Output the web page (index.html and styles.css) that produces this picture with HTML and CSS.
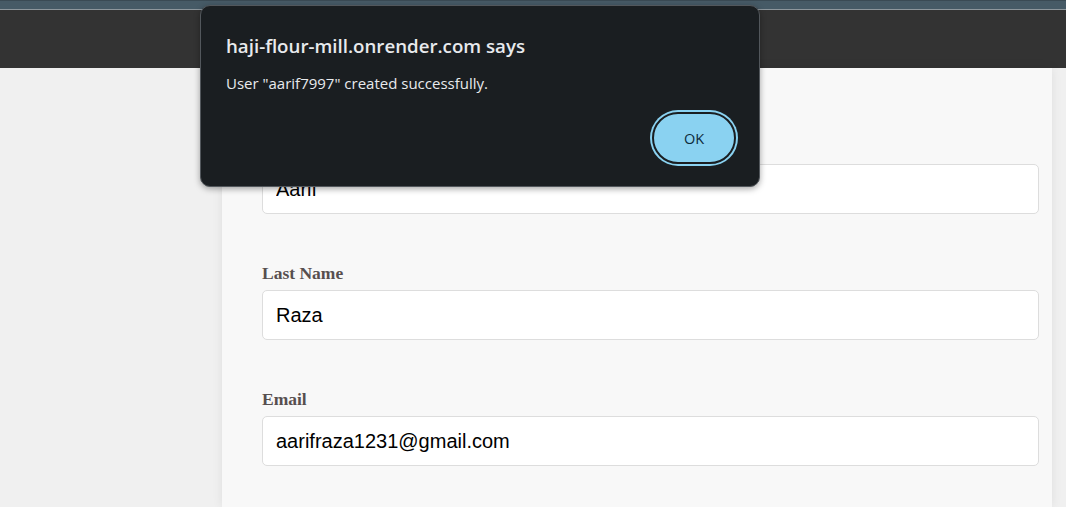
FILE: index.html
```html
<!DOCTYPE html>
<html>
<head>
<meta charset="utf-8">
<link rel="stylesheet" href="styles.css">
</head>
<body>
<div class="topstrip"></div>
<header class="header"></header>
<main class="main">
  <section class="card">
    <form class="form">
      <div class="group">
        <label class="label">First Name</label>
        <input class="input" type="text" value="Aarif">
      </div>
      <div class="group">
        <label class="label">Last Name</label>
        <input class="input" type="text" value="Raza">
      </div>
      <div class="group">
        <label class="label">Email</label>
        <input class="input" type="text" value="aarifraza1231@gmail.com">
      </div>
    </form>
  </section>
</main>
<div class="dialog">
  <div class="dialog-title">haji-flour-mill.onrender.com says</div>
  <div class="dialog-msg">User "aarif7997" created successfully.</div>
  <div class="dialog-actions">
    <button class="ok" type="button">OK</button>
  </div>
</div>
</body>
</html>
```
FILE: styles.css
```css
html, body {
  margin: 0;
  padding: 0;
  height: 100%;
  overflow: hidden;
}
body {
  background: #f0f0f0;
  font-family: "Liberation Sans", Arial, sans-serif;
}
.topstrip {
  box-sizing: border-box;
  height: 10px;
  background: #465a66;
  border-top: 1px solid #3a4a54;
  border-bottom: 1px solid #8d969c;
}
.header {
  height: 58px;
  background: #333333;
}
.main {
  display: flex;
  height: 439px;
}
.card {
  margin-left: 222px;
  width: 830px;
  background: #f8f8f8;
  box-shadow: 0 0 10px rgba(0, 0, 0, 0.08);
}
.form {
  display: flex;
  flex-direction: column;
  padding: 70px 13px 0 40px;
}
.group {
  display: flex;
  flex-direction: column;
  margin-bottom: 50px;
}
.label {
  font-family: "Liberation Serif", "Times New Roman", serif;
  font-weight: bold;
  font-size: 17.5px;
  line-height: 19px;
  color: #574f4f;
  margin-bottom: 7px;
}
.input {
  height: 50px;
  box-sizing: border-box;
  border: 1px solid #dddddd;
  border-radius: 5px;
  background: #ffffff;
  padding: 0 13px;
  font-family: "Liberation Sans", Arial, sans-serif;
  font-size: 20px;
  color: #000000;
  outline: none;
}
.dialog {
  position: absolute;
  left: 200px;
  top: 5px;
  width: 560px;
  height: 182px;
  box-sizing: border-box;
  background: #1a1e21;
  border: 1px solid #52575c;
  border-radius: 10px;
  box-shadow: 0 2px 6px rgba(0, 0, 0, 0.35);
  padding: 28px 21px 0 25px;
  display: flex;
  flex-direction: column;
  font-family: "Open Sans", "Noto Sans", sans-serif;
}
.dialog-title {
  font-size: 18.7px;
  font-weight: 600;
  line-height: 24px;
  color: #e8eaed;
}
.dialog-msg {
  margin-top: 15px;
  font-size: 15px;
  line-height: 20px;
  color: #e8eaed;
}
.dialog-actions {
  display: flex;
  justify-content: flex-end;
  margin-top: 19px;
}
.ok {
  width: 84px;
  height: 52px;
  border: 2px solid #1a1e21;
  border-radius: 26px;
  background: #8ad2f1;
  box-shadow: 0 0 0 2px #8ad2f1;
  color: #0d2b3c;
  font-family: "Open Sans", "Noto Sans", sans-serif;
  font-size: 14.5px;
  font-weight: 500;
  padding: 0;
  margin-right: 2px;
}
```
